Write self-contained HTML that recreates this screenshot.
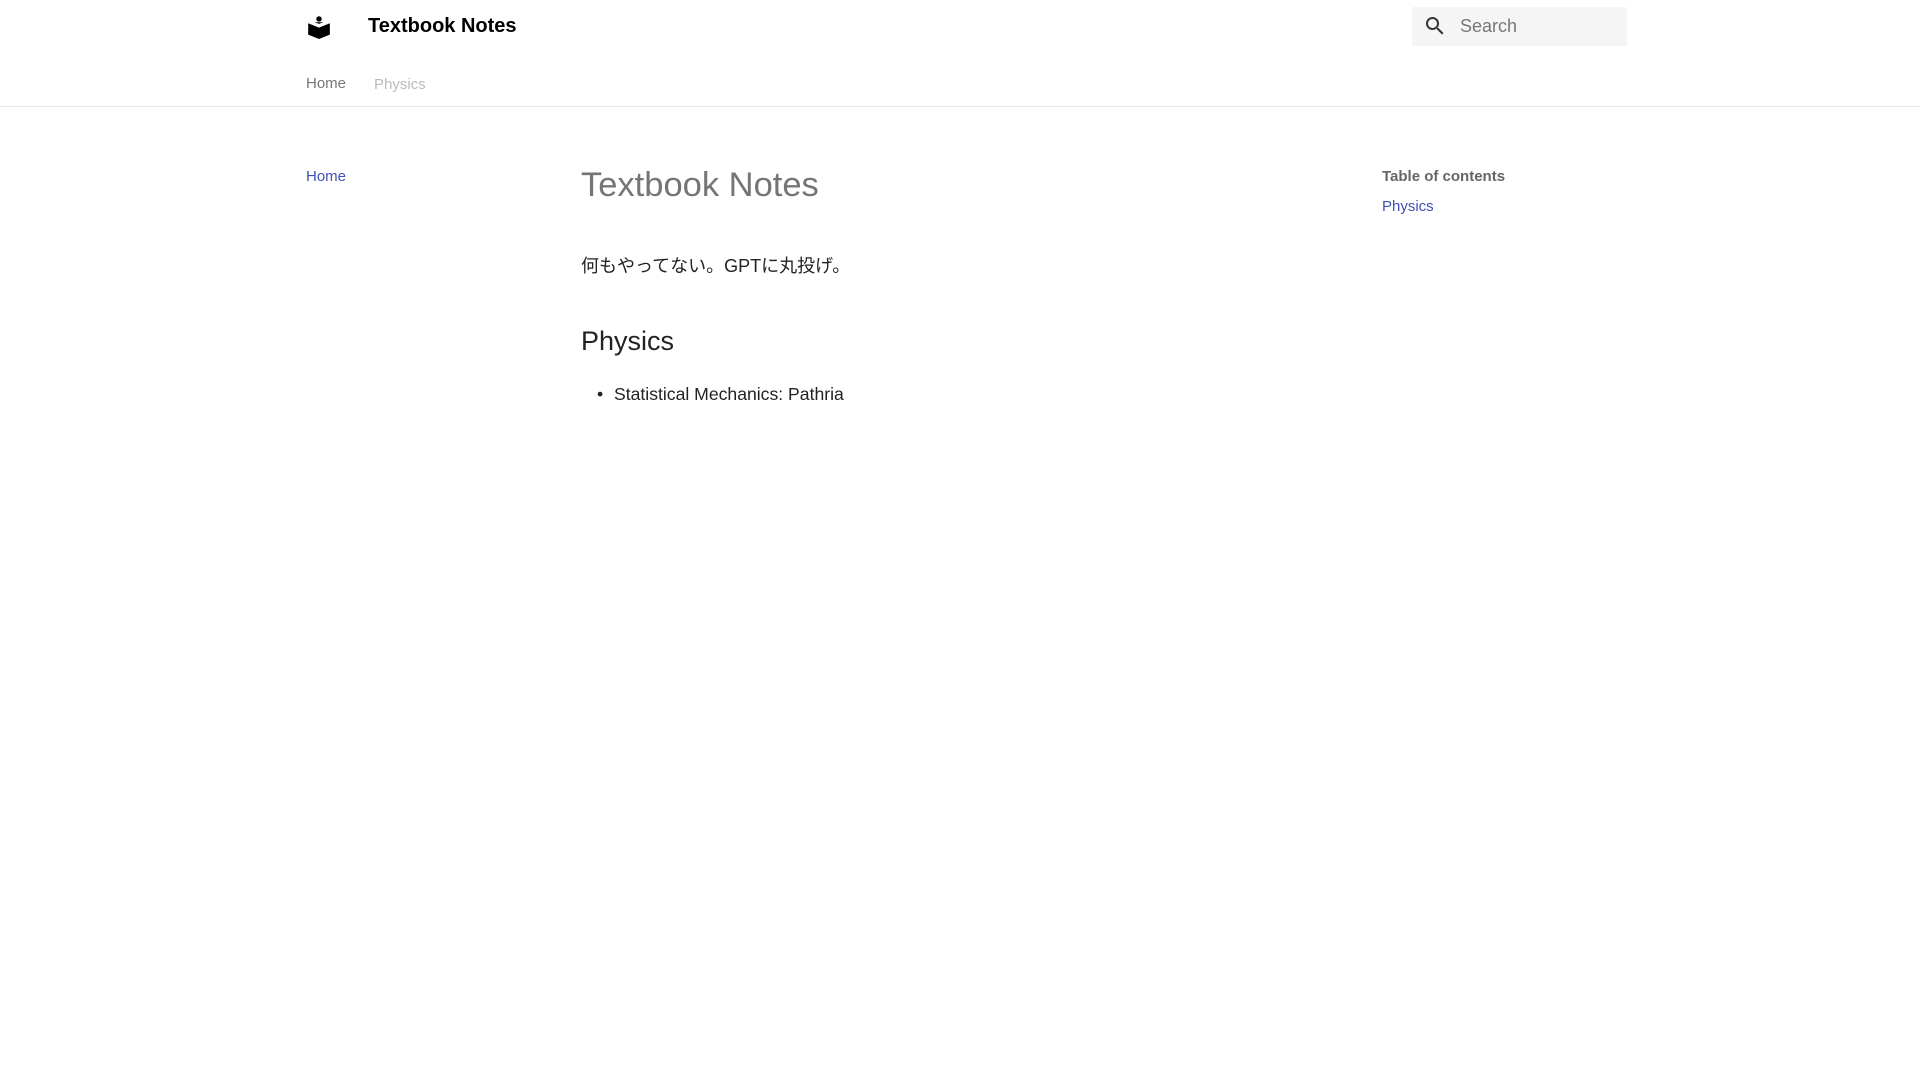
<!DOCTYPE html>
<html><head><meta charset="utf-8"><style>
body{margin:0;width:1920px;height:1080px;background:#fff;font-family:"Liberation Sans","Noto Sans CJK JP",sans-serif;position:relative;overflow:hidden}
.a{position:absolute;white-space:nowrap;line-height:1}
.hdr{position:absolute;left:0;top:0;width:1920px;height:106px;border-bottom:1px solid #e8e8e8}
.search{position:absolute;left:1412px;top:7px;width:215px;height:39px;background:#f5f5f5;border-radius:2px}
</style></head><body>
<div class="hdr"></div>
<svg class="a" style="left:306px;top:13px" width="26" height="26" viewBox="0 0 24 24"><path fill="#000" d="M12 3a2.5 2.5 0 1 1 0 5 2.5 2.5 0 0 1 0-5zM2 9.5l10 4 10-4V20l-10 4-10-4z"/><path fill="#000" d="M12 10l-4-1.5h8z"/></svg>
<div class="a" style="left:368px;top:16px;font-size:20px;font-weight:bold;color:#000">Textbook Notes</div>
<div class="search"></div>
<svg class="a" style="left:1423px;top:14px" width="24" height="24" viewBox="0 0 24 24"><path fill="#333" d="M9.5 3A6.5 6.5 0 0 1 16 9.5c0 1.61-.59 3.090-1.56 4.23l.27.27h.79l5 5-1.5 1.5-5-5v-.79l-.27-.27A6.52 6.52 0 0 1 9.5 16 6.5 6.5 0 0 1 3 9.5 6.5 6.5 0 0 1 9.5 3m0 2C7 5 5 7 5 9.5S7 14 9.5 14 14 12 14 9.5 12 5 9.5 5z"/></svg>
<div class="a" style="left:1460px;top:17px;font-size:18px;color:#777">Search</div>
<div class="a" style="left:306px;top:76px;font-size:15px;color:#777">Home</div>
<div class="a" style="left:374px;top:77px;font-size:15px;color:#bbb">Physics</div>
<div class="a" style="left:306px;top:169px;font-size:15px;color:#3f51b5">Home</div>
<div class="a" style="left:581px;top:168px;font-size:34.5px;color:#757575">Textbook Notes</div>
<div class="a" style="left:581px;top:257px;font-size:18px;color:#222">何もやってない。GPTに丸投げ。</div>
<div class="a" style="left:581px;top:328px;font-size:27px;color:#222">Physics</div>
<div class="a" style="left:597px;top:386px;font-size:17.6px;color:#222">•</div>
<div class="a" style="left:614px;top:386px;font-size:17.6px;color:#222">Statistical Mechanics: Pathria</div>
<div class="a" style="left:1382px;top:169px;font-size:15px;font-weight:bold;color:#666">Table of contents</div>
<div class="a" style="left:1382px;top:199px;font-size:15px;color:#3f51b5">Physics</div>
</body></html>
